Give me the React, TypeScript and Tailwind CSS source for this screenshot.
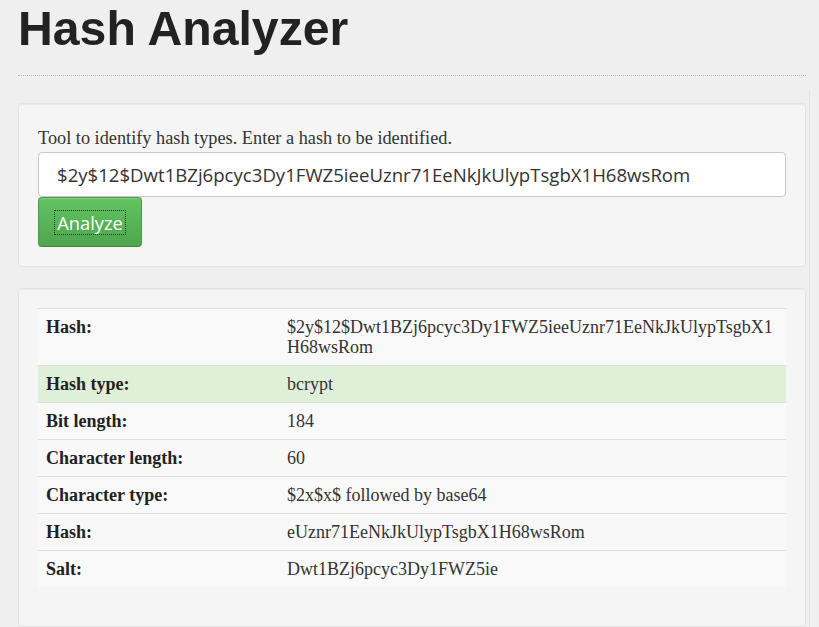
const HASH = "$2y$12$Dwt1BZj6pcyc3Dy1FWZ5ieeUznr71EeNkJkUlypTsgbX1H68wsRom";

const ROWS: { label: string; value: string; success?: boolean }[] = [
  { label: "Hash:", value: HASH },
  { label: "Hash type:", value: "bcrypt", success: true },
  { label: "Bit length:", value: "184" },
  { label: "Character length:", value: "60" },
  { label: "Character type:", value: "$2x$x$ followed by base64" },
  { label: "Hash:", value: "eUznr71EeNkJkUlypTsgbX1H68wsRom" },
  { label: "Salt:", value: "Dwt1BZj6pcyc3Dy1FWZ5ie" },
];

export default function App() {
  const serif = "font-['Liberation_Serif','Times_New_Roman',serif]";
  const well = "rounded-[4px] border border-[#e3e3e3] bg-[#f5f5f5] p-[19px] shadow-[inset_0_1px_1px_rgba(0,0,0,0.05)]";
  return (
    <div className="flex min-h-[627px] bg-[#efefef] text-[#333]">
      <div className="ml-[18px] w-[788px]">
        <div className="border-b border-dotted border-[#b8b8b8] pb-[19px]">
          <h1 className="font-['Liberation_Sans',Arial,sans-serif] text-[48.2px] font-bold leading-[56px] text-[#222]">Hash Analyzer</h1>
        </div>

        <div className={`mt-[27px] ${well}`}>
          <p className={`${serif} pt-[1px] text-[18.3px] leading-[28px] text-[#333]`}>
            Tool to identify hash types. Enter a hash to be identified.
          </p>
          <input
            readOnly
            value={HASH}
            className="block h-[45px] w-full rounded-[4px] border border-[#c8c8c8] bg-white px-[18px] font-['Open_Sans',sans-serif] text-[18.6px] text-[#333] outline-none"
          />
          <button className="flex h-[50px] w-[104px] items-center justify-center rounded-[4px] border border-[#4a9a4a] border-b-[#3f8a3f] bg-gradient-to-b from-[#62c462] to-[#4ea54e] font-['Open_Sans',sans-serif] text-[18.3px] text-white shadow-[inset_0_1px_0_rgba(255,255,255,0.2)]">
            <span className="px-[2px] leading-[23px] outline outline-1 outline-dotted outline-[#1c3a1c]">Analyze</span>
          </button>
        </div>

        <div className={`mt-[21px] ${well}`}>
          <table className={`mb-[20px] w-full table-fixed border-collapse ${serif} text-[18px] leading-[20px] text-[#333]`}>
            <tbody>
              {ROWS.map((r, i) => (
                <tr key={i} className={r.success ? "bg-[#dff0d8]" : i % 2 === 0 ? "bg-[#f9f9f9]" : "bg-[#f8f8f8]"}>
                  <th className="w-[241px] border-t border-[#dddddd] px-[8px] py-[8px] text-left align-top font-bold text-[#222]">{r.label}</th>
                  <td className="border-t border-[#dddddd] px-[8px] py-[8px] align-top break-all">{r.value}</td>
                </tr>
              ))}
            </tbody>
          </table>
        </div>
      </div>
      <div className="ml-[3px] mt-[90px] flex-1 border-l border-[#e4e4e4]" />
    </div>
  );
}
